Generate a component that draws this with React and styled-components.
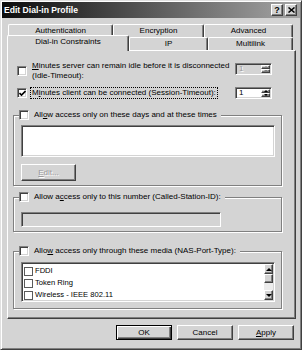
import React from "react";
import styled, { createGlobalStyle, css } from "styled-components";

const FACE = "#d4d4d4";
const SHADOW = "#808080";
const DARK = "#404040";

const GlobalStyle = createGlobalStyle`
  html, body { margin: 0; padding: 0; background: ${FACE}; }
  body {
    font-family: "Liberation Sans", Arial, sans-serif;
    font-size: 8px;
    color: #000;
  }
  * { box-sizing: border-box; }
`;

const raised = css`
  background: ${FACE};
  border: 1px solid;
  border-color: #fff ${DARK} ${DARK} #fff;
  box-shadow: inset -1px -1px 0 ${SHADOW};
`;

const sunken = css`
  border: 1px solid;
  border-color: ${SHADOW} #fff #fff ${SHADOW};
  box-shadow: inset 1px 1px 0 ${DARK}, inset -1px -1px 0 ${FACE};
`;

const Window = styled.div`
  width: 302px;
  height: 350px;
  display: flex;
  flex-direction: column;
  background: ${FACE};
  border: 1px solid;
  border-color: #e0e0e0 ${DARK} ${DARK} #e0e0e0;
  box-shadow: inset 1px 1px 0 #fff, inset -1px -1px 0 ${SHADOW};
  padding: 1px;
`;

const TitleBar = styled.div`
  height: 16px;
  display: flex;
  align-items: center;
  padding: 0 3px 0 2px;
  background: linear-gradient(to right, #0c0c0c, #a6a6a6);
`;

const Title = styled.div`
  flex: 1;
  color: #fff;
  font-weight: bold;
  font-size: 8.6px;
`;

const TitleButtons = styled.div`
  display: flex;
  gap: 2px;
`;

const TitleButton = styled.div`
  ${raised};
  width: 12px;
  height: 12px;
  display: flex;
  align-items: center;
  justify-content: center;
  font-weight: bold;
  font-size: 9px;
  line-height: 1;
`;

const Body = styled.div`
  display: flex;
  flex-direction: column;
  padding: 6px 4px 0 5px;
`;

const TabRow = styled.div`
  display: flex;
  align-items: flex-end;
  height: 13px;
  padding-left: ${(p) => p.$indent || 0}px;
`;

const Tab = styled.div`
  width: ${(p) => p.$w}px;
  height: 13px;
  background: ${FACE};
  border-top: 1px solid #fff;
  border-left: 1px solid #fff;
  border-right: 1px solid ${DARK};
  box-shadow: inset -1px 0 0 ${SHADOW};
  border-radius: 2px 2px 0 0;
  text-align: center;
  line-height: 11px;
  ${(p) =>
    p.$active &&
    css`
      height: 16px;
      margin-top: -2px;
      margin-bottom: -1px;
      position: relative;
      z-index: 1;
      line-height: 12px;
    `}
`;

const Panel = styled.div`
  height: 269px;
  display: flex;
  flex-direction: column;
  padding-top: 10px;
  border-top: 1px solid #fff;
  border-left: 1px solid #fff;
  border-right: 1px solid ${DARK};
  border-bottom: 1px solid ${DARK};
  box-shadow: inset -1px -1px 0 ${SHADOW};
`;

const OptionRow = styled.div`
  display: flex;
  align-items: ${(p) => (p.$top ? "flex-start" : "center")};
  padding: 0 23px 0 9px;
  margin-top: ${(p) => p.$gap || 0}px;
`;

const Box = styled.span`
  flex: none;
  width: ${(p) => p.$size || 10}px;
  height: ${(p) => p.$size || 10}px;
  margin-top: ${(p) => p.$drop || 0}px;
  background: #fff;
  display: flex;
  align-items: center;
  justify-content: center;
  ${(p) =>
    p.$flat
      ? css`
          border: 1px solid #5a5a5a;
        `
      : sunken}
`;

const Label = styled.span`
  margin-left: ${(p) => p.$ml ?? 5}px;
  line-height: 10px;
  flex: ${(p) => (p.$grow ? 1 : "none")};
  white-space: nowrap;
  ${(p) =>
    p.$focus &&
    css`
      outline: 1px dotted #000;
      padding: 0 1px;
    `}
`;

const U = styled.span`
  text-decoration: underline;
`;

const SpinBox = styled.div`
  ${sunken};
  width: 37px;
  height: 12px;
  margin-left: auto;
  margin-top: ${(p) => p.$drop || 0}px;
  display: flex;
  background: ${(p) => (p.$disabled ? FACE : "#fff")};
`;

const SpinValue = styled.span`
  flex: 1;
  padding-left: 3px;
  line-height: 10px;
  color: ${(p) => (p.$disabled ? "#9a9a9a" : "#000")};
  text-shadow: ${(p) => (p.$disabled ? "1px 1px 0 #fff" : "none")};
`;

const Spinner = styled.div`
  width: 10px;
  display: flex;
  flex-direction: column;
  padding: 1px 1px 1px 0;
`;

const SpinButton = styled.div`
  ${raised};
  flex: 1;
  display: flex;
  align-items: center;
  justify-content: center;
`;

const Arrow = styled.span`
  width: 0;
  height: 0;
  border-left: ${(p) => p.$s}px solid transparent;
  border-right: ${(p) => p.$s}px solid transparent;
  ${(p) =>
    p.$dir === "up"
      ? css`
          border-bottom: ${p.$s}px solid ${p.$muted ? SHADOW : "#000"};
        `
      : css`
          border-top: ${p.$s}px solid ${p.$muted ? SHADOW : "#000"};
        `}
`;

const Group = styled.div`
  width: 269px;
  margin: ${(p) => p.$gap}px 0 0 5px;
  padding: 0 7px ${(p) => p.$bottom || 4}px 7px;
  display: flex;
  flex-direction: column;
  align-items: flex-start;
  border: 1px solid ${SHADOW};
  box-shadow: 1px 1px 0 #fff, inset 1px 1px 0 #fff;
`;

const Legend = styled.div`
  display: flex;
  align-items: center;
  height: 10px;
  margin: -6px 0 0 -2px;
  padding-right: 4px;
  background: ${FACE};
`;

const WhiteList = styled.div`
  ${sunken};
  background: #fff;
  width: 254px;
  height: ${(p) => p.$h}px;
  margin-top: ${(p) => p.$gap}px;
  display: flex;
`;

const PushButton = styled.div`
  ${raised};
  width: ${(p) => p.$w}px;
  height: ${(p) => p.$h}px;
  margin-top: ${(p) => p.$gap || 0}px;
  display: flex;
  align-items: center;
  justify-content: center;
  color: ${(p) => (p.$disabled ? "#9a9a9a" : "#000")};
  text-shadow: ${(p) => (p.$disabled ? "1px 1px 0 #fff" : "none")};
  ${(p) =>
    p.$default &&
    css`
      border: 1px solid #000;
      box-shadow: inset 1px 1px 0 #fff, inset -1px -1px 0 ${DARK},
        inset -2px -2px 0 ${SHADOW};
    `}
`;

const DisabledField = styled.div`
  ${sunken};
  width: 200px;
  height: 15px;
  margin-top: 10px;
  background: ${FACE};
`;

const Items = styled.div`
  flex: 1;
  padding: 2px 0 0 2px;
  display: flex;
  flex-direction: column;
`;

const Item = styled.div`
  display: flex;
  align-items: center;
  height: 12px;
  font-size: 7.6px;
`;

const ScrollBar = styled.div`
  width: 10px;
  display: flex;
  flex-direction: column;
  padding: 1px 1px 1px 0;
`;

const ScrollButton = styled.div`
  ${raised};
  height: 10px;
  display: flex;
  align-items: center;
  justify-content: center;
`;

const Thumb = styled.div`
  ${raised};
  height: 9px;
`;

const Track = styled.div`
  flex: 1;
  background: #ececec;
`;

const ButtonRow = styled.div`
  display: flex;
  justify-content: flex-end;
  gap: 5px;
  margin-top: 6px;
  padding-right: 2px;
`;

const Check = () => (
  <svg width="7" height="7" viewBox="0 0 7 7">
    <path d="M0.5 3 L2.5 5 L6.5 1" fill="none" stroke="#000" strokeWidth="1.6" />
  </svg>
);

const CloseGlyph = () => (
  <svg width="7" height="6" viewBox="0 0 7 6">
    <path d="M0.5 0.5 L6.5 5.5 M6.5 0.5 L0.5 5.5" stroke="#000" strokeWidth="1.5" />
  </svg>
);

const Spin = ({ value, disabled, drop }) => (
  <SpinBox $disabled={disabled} $drop={drop}>
    <SpinValue $disabled={disabled}>{value}</SpinValue>
    <Spinner>
      <SpinButton>
        <Arrow $dir="up" $s={2} $muted={disabled} />
      </SpinButton>
      <SpinButton>
        <Arrow $dir="down" $s={2} $muted={disabled} />
      </SpinButton>
    </Spinner>
  </SpinBox>
);

const mediaTypes = ["FDDI", "Token Ring", "Wireless - IEEE 802.11"];

export default function App() {
  return (
    <>
      <GlobalStyle />
      <Window>
        <TitleBar>
          <Title>Edit Dial-in Profile</Title>
          <TitleButtons>
            <TitleButton>?</TitleButton>
            <TitleButton>
              <CloseGlyph />
            </TitleButton>
          </TitleButtons>
        </TitleBar>

        <Body>
          <TabRow $indent={1}>
            <Tab $w={105}>Authentication</Tab>
            <Tab $w={91}>Encryption</Tab>
            <Tab $w={89}>Advanced</Tab>
          </TabRow>
          <TabRow>
            <Tab $w={122} $active>
              Dial-in Constraints
            </Tab>
            <Tab $w={79}>IP</Tab>
            <Tab $w={85}>Multilink</Tab>
          </TabRow>

          <Panel>
            <OptionRow $top>
              <Box $drop={5} />
              <Label $grow>
                <U>M</U>inutes server can remain idle before it is disconnected
                <br />
                (Idle-Timeout):
              </Label>
              <Spin value="1" disabled drop={2} />
            </OptionRow>

            <OptionRow $gap={6}>
              <Box>
                <Check />
              </Box>
              <Label $ml={4} $focus>
                M<U>i</U>nutes client can be connected (Session-Timeout):
              </Label>
              <Spin value="1" />
            </OptionRow>

            <Group $gap={16}>
              <Legend>
                <Box />
                <Label>
                  All<U>o</U>w access only on these days and at these times
                </Label>
              </Legend>
              <WhiteList $h={32} $gap={5} />
              <PushButton $w={55} $h={17} $gap={7} $disabled>
                <U>E</U>dit...
              </PushButton>
            </Group>

            <Group $gap={11}>
              <Legend>
                <Box />
                <Label>
                  Allow a<U>c</U>cess only to this number (Called-Station-ID):
                </Label>
              </Legend>
              <DisabledField />
            </Group>

            <Group $gap={19} $bottom={6}>
              <Legend>
                <Box />
                <Label>
                  Allo<U>w</U> access only through these media (NAS-Port-Type):
                </Label>
              </Legend>
              <WhiteList $h={40} $gap={6}>
                <Items>
                  {mediaTypes.map((m) => (
                    <Item key={m}>
                      <Box $flat $size={9} />
                      <Label $ml={2}>{m}</Label>
                    </Item>
                  ))}
                </Items>
                <ScrollBar>
                  <ScrollButton>
                    <Arrow $dir="up" $s={3} />
                  </ScrollButton>
                  <Thumb />
                  <Track />
                  <ScrollButton>
                    <Arrow $dir="down" $s={3} />
                  </ScrollButton>
                </ScrollBar>
              </WhiteList>
            </Group>
          </Panel>

          <ButtonRow>
            <PushButton $w={56} $h={15} $default>
              OK
            </PushButton>
            <PushButton $w={56} $h={15}>
              Cancel
            </PushButton>
            <PushButton $w={56} $h={15}>
              <U>A</U>pply
            </PushButton>
          </ButtonRow>
        </Body>
      </Window>
    </>
  );
}
